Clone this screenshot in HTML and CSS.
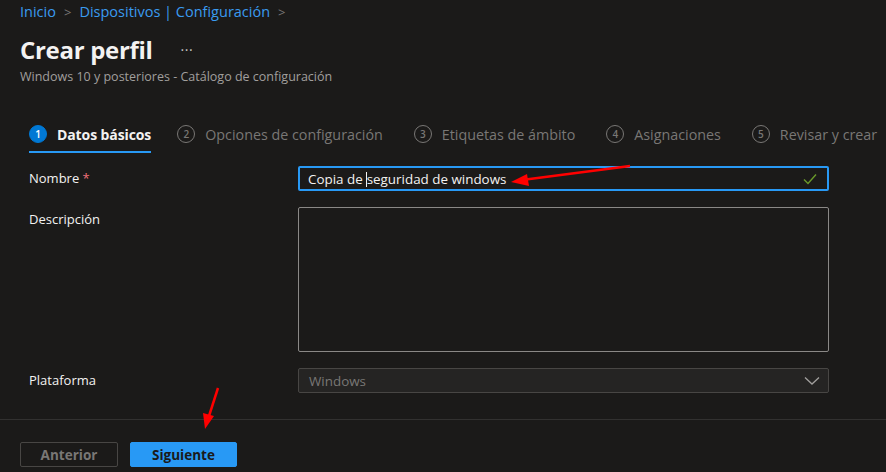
FILE: index.html
```
<!DOCTYPE html>
<html lang="es">
<head>
    <meta charset="UTF-8">
    <title>Crear perfil</title>
    <link rel="stylesheet" href="styles.css">
</head>
<body>
    <div class="page">
        <div class="header">
            <nav class="breadcrumb">
                <a href="#">Inicio</a><span class="sep">&gt;</span><a href="#">Dispositivos | Configuración</a><span class="sep">&gt;</span>
            </nav>
            <div class="title-row">
                <h1>Crear perfil</h1>
                <span class="more">&middot;&middot;&middot;</span>
            </div>
            <div class="subtitle">Windows 10 y posteriores - Catálogo de configuración</div>
        </div>

        <ul class="steps">
            <li class="step active"><span class="num">1</span><span class="label">Datos básicos</span></li>
            <li class="step"><span class="num">2</span><span class="label">Opciones de configuración</span></li>
            <li class="step"><span class="num">3</span><span class="label">Etiquetas de ámbito</span></li>
            <li class="step"><span class="num">4</span><span class="label">Asignaciones</span></li>
            <li class="step"><span class="num">5</span><span class="label">Revisar y crear</span></li>
        </ul>

        <div class="form">
            <div class="row">
                <label class="field-label">Nombre <span class="req">*</span></label>
                <div class="input focused">
                    <span class="value">Copia de<span class="caret"></span>seguridad de windows</span>
                    <svg class="check" width="14" height="12" viewBox="0 0 14 12"><path d="M1 6.5 L5 10.5 L13 1.5" fill="none" stroke="#6a9a2a" stroke-width="1.4"/></svg>
                </div>
            </div>
            <div class="row">
                <label class="field-label">Descripción</label>
                <div class="textarea"></div>
            </div>
            <div class="row">
                <label class="field-label">Plataforma</label>
                <div class="select">
                    <span class="placeholder">Windows</span>
                    <svg class="chevron" width="16" height="10" viewBox="0 0 16 10"><path d="M1 1.5 L8 8 L15 1.5" fill="none" stroke="#a19f9d" stroke-width="1.3"/></svg>
                </div>
            </div>
        </div>

        <div class="footer">
            <button class="btn btn-secondary">Anterior</button>
            <button class="btn btn-primary">Siguiente</button>
        </div>

        <svg class="annotations" width="886" height="472" viewBox="0 0 886 472">
            <line x1="630" y1="166" x2="522" y2="180" stroke="#f00" stroke-width="2.5"/>
            <polygon points="511,182 527,174 529,186" fill="#f00"/>
            <line x1="218" y1="388" x2="209" y2="416" stroke="#f00" stroke-width="2.5"/>
            <polygon points="205,429 203,413 214,416" fill="#f00"/>
        </svg>
    </div>
</body>
</html>
```

FILE: styles.css
```
html,
body {
    margin: 0;
    background: #1b1a19;
}

body {
    font-family: "Open Sans", "Noto Sans", sans-serif;
    color: #f3f2f1;
    font-size: 13px;
}

.page {
    position: relative;
    width: 886px;
    height: 472px;
    overflow: hidden;
}

.header {
    padding: 2px 0 0 20px;
}

.breadcrumb {
    font-size: 14.5px;
    height: 20px;
    line-height: 20px;
}

.breadcrumb a {
    color: #3a9bf0;
    text-decoration: none;
}

.breadcrumb .sep {
    color: #797775;
    margin: 0 8px;
    font-size: 13px;
}

.title-row {
    display: flex;
    align-items: center;
    margin-top: 12px;
    height: 30px;
}

h1 {
    margin: 0;
    font-size: 24px;
    font-weight: 700;
    letter-spacing: -0.3px;
}

.more {
    margin-left: 28px;
    color: #c8c6c4;
    font-size: 14px;
    letter-spacing: 0.5px;
}

.subtitle {
    margin-top: 4px;
    font-size: 12.5px;
    color: #a19f9d;
}

.steps {
    list-style: none;
    margin: 36px 0 0 29px;
    padding: 0;
    display: flex;
    gap: 31px;
}

.step {
    display: flex;
    align-items: center;
    height: 32px;
    padding-bottom: 4px;
    box-sizing: border-box;
    color: #797775;
    font-size: 14.3px;
    border-bottom: 2px solid transparent;
}

.step .num {
    width: 16px;
    height: 16px;
    border: 1.5px solid #797775;
    border-radius: 50%;
    display: flex;
    align-items: center;
    justify-content: center;
    font-size: 10px;
    font-weight: 600;
    margin-right: 10px;
}

.step.active {
    color: #f3f2f1;
    font-weight: 700;
    font-size: 14px;
    letter-spacing: -0.1px;
    margin-right: -5px;
    border-bottom-color: #2899f5;
}

.step.active .num {
    background: #0078d4;
    border-color: #0078d4;
    color: #fff;
}

.form {
    margin-top: 13px;
    padding-left: 29px;
}

.row {
    display: flex;
    margin-bottom: 16px;
}

.field-label {
    width: 269px;
    flex: none;
    font-size: 13px;
    line-height: 25px;
}

.req {
    color: #f1707b;
}

.input {
    width: 531px;
    height: 25px;
    box-sizing: border-box;
    border: 2px solid #2899f5;
    border-radius: 2px;
    display: flex;
    align-items: center;
    padding: 0 10px 0 8px;
}

.input .value {
    flex: 1;
    font-size: 13.4px;
}

.caret {
    display: inline-block;
    width: 1px;
    height: 15px;
    background: #f3f2f1;
    margin: 0 0 -3px 3px;
}

.textarea {
    width: 531px;
    height: 145px;
    box-sizing: border-box;
    border: 1px solid #8a8886;
    border-radius: 2px;
}

.select {
    width: 531px;
    height: 25px;
    box-sizing: border-box;
    border: 1px solid #484644;
    border-radius: 2px;
    background: #252423;
    display: flex;
    align-items: center;
    padding: 0 8px 0 10px;
}

.select .placeholder {
    flex: 1;
    color: #797775;
    font-size: 13.4px;
}

.footer {
    position: absolute;
    left: 0;
    right: 0;
    top: 419px;
    border-top: 1px solid #323130;
    padding: 22px 0 0 20px;
    display: flex;
    gap: 12px;
}

.btn {
    height: 25px;
    font-family: inherit;
    font-size: 13.5px;
    font-weight: 700;
    border-radius: 2px;
}

.btn-secondary {
    width: 98px;
    background: transparent;
    border: 1px solid #484644;
    color: #797775;
}

.btn-primary {
    width: 107px;
    background: #2899f5;
    border: 1px solid #2899f5;
    color: #1b1a19;
}

.annotations {
    position: absolute;
    left: 0;
    top: 0;
    pointer-events: none;
}
```
